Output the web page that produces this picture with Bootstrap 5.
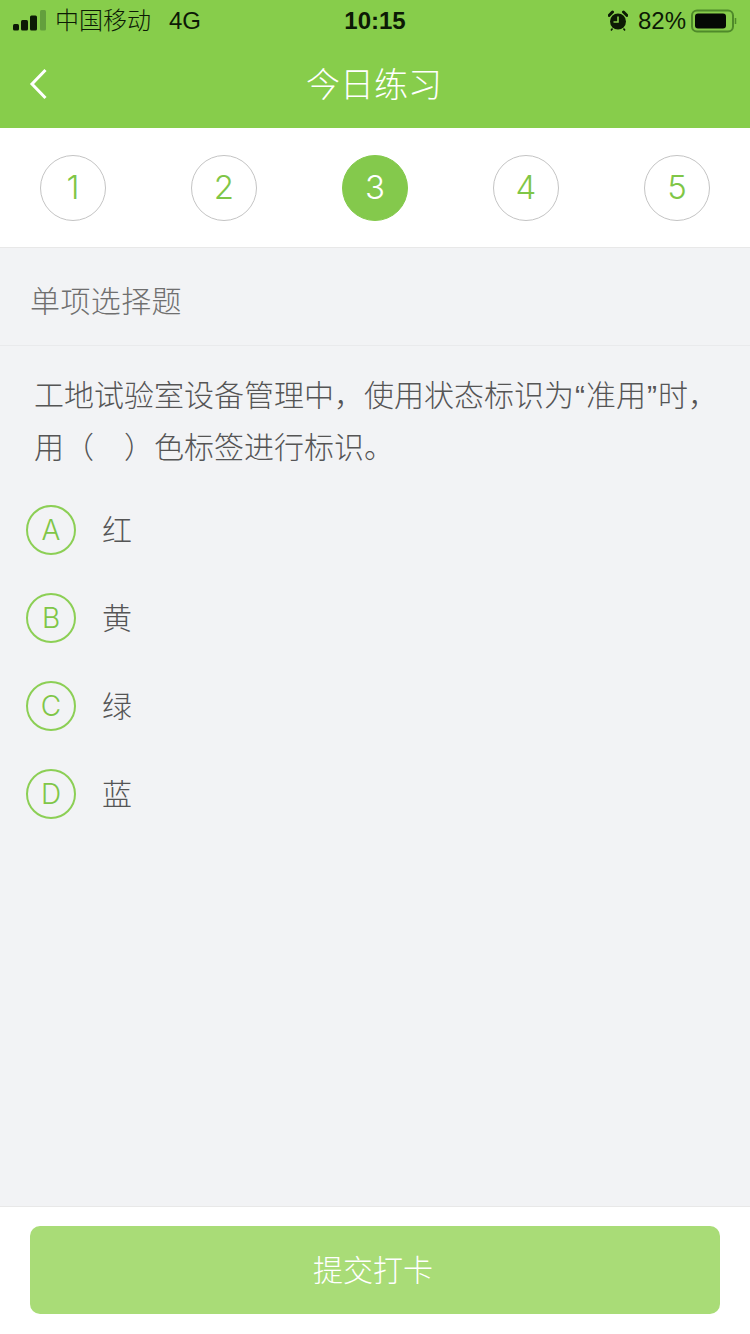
<!DOCTYPE html>
<html lang="zh">
<head>
<meta charset="utf-8">
<title>今日练习</title>
<link href="https://cdn.jsdelivr.net/npm/bootstrap@5.3.0/dist/css/bootstrap.min.css" rel="stylesheet">
<style>
html,body{height:1334px;overflow:hidden}
body{font-family:"Liberation Sans","Noto Sans CJK SC",sans-serif;background:#f2f3f5;color:#666}
.app-page{height:1334px}
.head-zone{background:#87cd4b;height:128px}
.status-row{height:42px;padding:0 13px;color:#0c1a05;font-size:24px;position:relative;font-weight:300}
.signal-icon{width:34px;height:22px;margin-right:8px;flex:none}
.net{margin-left:18px}
.clock{position:absolute;left:0;right:0;top:5px;text-align:center;font-weight:700;font-size:24px;line-height:32px}
.batt-pct{margin:0 5px 0 10px}
.title-row{height:86px;position:relative;color:#fff;font-size:34px;font-weight:300;padding:0 2px 0 0}
.back-icon{position:absolute;left:27px;top:25px}
.steps-zone{background:#fff;height:120px;border-bottom:1px solid #e8e8e8;padding:0 40px}
.step-dot{width:66px;height:66px;border:1px solid #c4c4c4;border-radius:50%;color:#7fc647;font-family:Inter,"Liberation Sans",sans-serif;font-weight:300;font-size:33px}
.step-on{background:#84c94c;border-color:#84c94c;color:#fff}
.kind-row{height:98px;border-bottom:1px solid #e9eaec;padding:10px 0 0 30px;font-size:30px;font-weight:300;letter-spacing:.4px;color:#6f6f6f}
.stem{font-size:30px;font-weight:300;line-height:52px;padding:24px 20px 0 34px;color:#555}
.quote-mark{padding:0 1px}
.blank-gap{display:inline-block;width:30px}
.choice-list{padding:12px 0 0 26px}
.choice-row{height:88px}
.choice-mark{width:50px;height:50px;border:2px solid #8ccf55;border-radius:50%;color:#7fc647;font-family:Inter,"Liberation Sans",sans-serif;font-weight:300;font-size:28px;margin-right:26px}
.choice-text{font-size:30px;font-weight:300;color:#555}
.foot-zone{height:128px;background:#fff;border-top:1px solid #e8e8e8;padding:19px 30px 0}
.submit-bar{width:100%;height:88px;border:0;border-radius:10px;background:#a9dc77;color:#fff;font-size:30px;font-weight:300;padding-right:16px;opacity:1}
.submit-bar:disabled{background:#a9dc77;color:#fff;opacity:1}
</style>
</head>
<body>
<div class="app-page d-flex flex-column">
  <div class="head-zone">
    <div class="status-row d-flex align-items-center">
      <svg class="signal-icon" viewBox="0 0 34 22"><rect x="0" y="14" width="6" height="6.500" rx="1.500" fill="#0c1a05"/><rect x="8" y="10" width="7" height="10.500" rx="1.500" fill="#0c1a05"/><rect x="17" y="5.500" width="7" height="15" rx="1.500" fill="#0c1a05"/><rect x="27" y="0" width="6" height="20.500" rx="1.500" fill="#639f3d"/></svg>
      <span>中国移动</span><span class="net">4G</span>
      <div class="clock">10:15</div>
      <div class="ms-auto d-flex align-items-center">
        <svg width="20" height="22" viewBox="0 0 20 22"><circle cx="10" cy="11.500" r="8" fill="#0c1a05"/><path d="M10 6.500V12H5.500" fill="none" stroke="#87cd4b" stroke-width="1.600"/><path d="M1 5.500 4.500 2M19 5.500 15.500 2" stroke="#0c1a05" stroke-width="3" stroke-linecap="round"/><path d="M4.500 18.500 3 20.500M15.500 18.500 17 20.500" stroke="#0c1a05" stroke-width="1.500"/></svg>
        <span class="batt-pct">82%</span>
        <svg width="46" height="24" viewBox="0 0 46 24"><rect x="1" y="1.500" width="41" height="21" rx="5" fill="none" stroke="#4f8a2a" stroke-width="2"/><rect x="4" y="4.500" width="31" height="15" rx="3" fill="#050805"/><path d="M44.500 9v6" stroke="#4f8a2a" stroke-width="1.500"/></svg>
      </div>
    </div>
    <div class="title-row d-flex align-items-center justify-content-center">
      <svg class="back-icon" width="22" height="34" viewBox="0 0 22 34"><path d="M18.500 3 5 17l13.500 14" fill="none" stroke="#fff" stroke-width="3"/></svg>
      今日练习
    </div>
  </div>
  <div class="steps-zone d-flex align-items-center justify-content-between">
    <div class="step-dot d-flex align-items-center justify-content-center">1</div>
    <div class="step-dot d-flex align-items-center justify-content-center">2</div>
    <div class="step-dot step-on d-flex align-items-center justify-content-center">3</div>
    <div class="step-dot d-flex align-items-center justify-content-center">4</div>
    <div class="step-dot d-flex align-items-center justify-content-center">5</div>
  </div>
  <div class="kind-row d-flex align-items-center">单项选择题</div>
  <div class="flex-grow-1">
    <div class="stem">
      <div class="text-nowrap">工地试验室设备管理中，使用状态标识为<span class="quote-mark">“</span>准用<span class="quote-mark">”</span>时，</div>
      <div class="text-nowrap">用（<span class="blank-gap"></span>）色标签进行标识。</div>
    </div>
    <div class="choice-list">
      <div class="choice-row d-flex align-items-center"><span class="choice-mark d-flex align-items-center justify-content-center">A</span><span class="choice-text">红</span></div>
      <div class="choice-row d-flex align-items-center"><span class="choice-mark d-flex align-items-center justify-content-center">B</span><span class="choice-text">黄</span></div>
      <div class="choice-row d-flex align-items-center"><span class="choice-mark d-flex align-items-center justify-content-center">C</span><span class="choice-text">绿</span></div>
      <div class="choice-row d-flex align-items-center"><span class="choice-mark d-flex align-items-center justify-content-center">D</span><span class="choice-text">蓝</span></div>
    </div>
  </div>
  <div class="foot-zone">
    <button class="btn submit-bar" type="button" disabled>提交打卡</button>
  </div>
</div>
<script src="https://cdn.jsdelivr.net/npm/bootstrap@5.3.0/dist/js/bootstrap.bundle.min.js"></script>
</body>
</html>
